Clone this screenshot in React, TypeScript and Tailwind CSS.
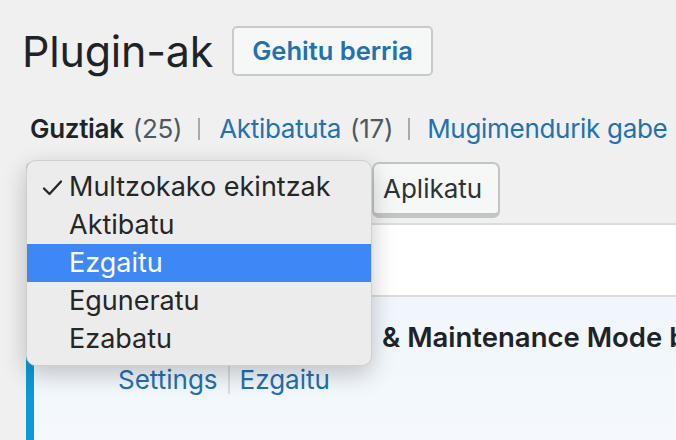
import React from "react";

export default function App() {
  const items = [
    { label: "Multzokako ekintzak", checked: true },
    { label: "Aktibatu" },
    { label: "Ezgaitu", active: true },
    { label: "Eguneratu" },
    { label: "Ezabatu" },
  ];
  return (
    <div className="relative w-[676px] h-[440px] overflow-hidden bg-[#f0f0f1] font-['Inter',sans-serif]">
      <div className="flex items-center gap-[19px] pl-[22px] pt-[26px]">
        <h1 className="text-[43px] leading-[48px] font-normal text-[#1d2327] tracking-[-0.2px]">Plugin-ak</h1>
        <button className="h-[50px] px-[18px] rounded-[5px] border-2 border-[#c9cacc] bg-[#f6f7f7] text-[25.5px] font-semibold text-[#2271b1]">
          Gehitu berria
        </button>
      </div>

      <div className="mt-[36px] pl-[30px] text-[26px] leading-[34px] whitespace-nowrap text-[#50575e] tracking-[-0.3px] flex items-center">
        <span className="font-semibold text-[#1d2327]">Guztiak</span>
        <span className="ml-[9px]">(25)</span>
        <span className="ml-[16px] mr-[19px] w-[2px] h-[22px] bg-[#a7aaad]" />
        <span className="text-[#2271b1]">Aktibatuta</span>
        <span className="ml-[9px]">(17)</span>
        <span className="ml-[15px] mr-[17px] w-[2px] h-[22px] bg-[#a7aaad]" />
        <span className="text-[#2271b1]">Mugimendurik gabe</span>
      </div>

      <div className="mt-[16px] flex items-start pl-[26px]">
        <div className="w-[330px] h-[52px] rounded-[6px] border-2 border-[#8fb6d9] bg-white" />
        <button className="ml-[16px] h-[56px] w-[128px] rounded-[7px] border-2 border-[#c3c4c7] border-b-[5px] bg-[#f6f7f7] text-[26px] text-[#2c3338] text-left pl-[9px]">
          Aplikatu
        </button>
      </div>

      <div className="mt-[5px] ml-[26px]">
        <div className="h-[74px] border-t-2 border-b-2 border-[#dcdcde] bg-white" />
        <div className="h-[200px] border-l-[8px] border-[#0b9ad6] bg-gradient-to-b from-[#f0f6fc] to-[#f6fafd]">
          <div className="pt-[23px] pl-[348px] text-[27.5px] leading-[35px] font-semibold text-[#1d2327] whitespace-nowrap">
            &amp; Maintenance Mode by SeedProd
          </div>
          <div className="mt-[8px] pl-[84px] text-[26px] leading-[34px] text-[#2271b1] flex items-center">
            <span>Settings</span>
            <span className="mx-[10px] w-[2px] h-[28px] bg-[#dcdcde]" />
            <span>Ezgaitu</span>
          </div>
        </div>
      </div>

      <div className="absolute left-[26px] top-[160px] w-[346px] py-[7px] rounded-[10px] bg-[#ececec] border border-[#cfcfcf] shadow-[0_8px_24px_rgba(0,0,0,0.22)]">
        {items.map((it) => (
          <div
            key={it.label}
            className={
              "relative h-[38px] pl-[42px] flex items-center text-[27px] leading-[38px] whitespace-nowrap " +
              (it.active ? "bg-[#3d88f5] text-white" : "text-[#262626]")
            }
          >
            {it.checked && (
              <svg className="absolute left-[15px] top-[11px]" width="21" height="17" viewBox="0 0 21 17" fill="none">
                <path d="M2 9.5 L7.5 15 L19 2.5" stroke="#262626" strokeWidth="2.3" strokeLinecap="round" strokeLinejoin="round" />
              </svg>
            )}
            {it.label}
          </div>
        ))}
      </div>
    </div>
  );
}
